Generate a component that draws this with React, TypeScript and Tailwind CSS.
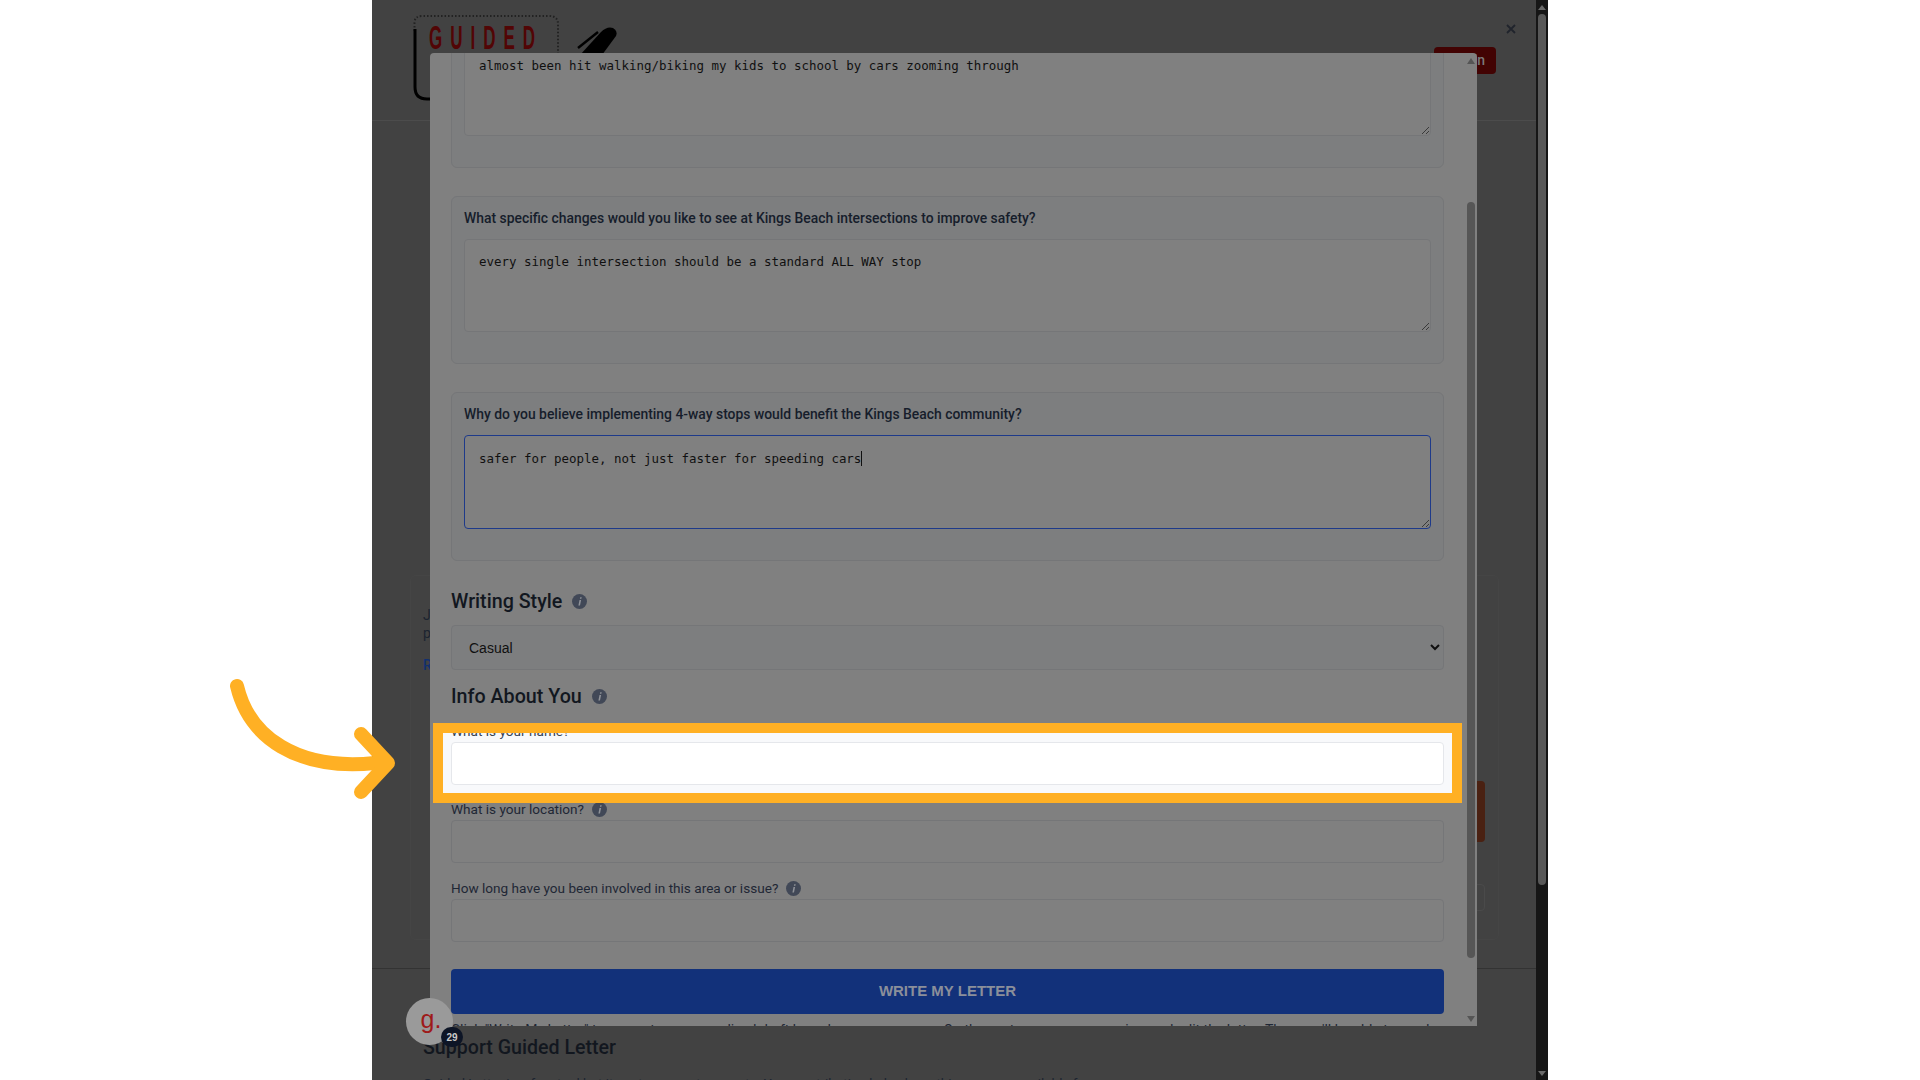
import React from "react";

const Info = () => (
  <svg width="15" height="15" viewBox="0 0 15 15" className="shrink-0">
    <circle cx="7.5" cy="7.5" r="7.5" fill="#414857" />
    <path d="M8.2 3.2h1.5l-.3 1.5H7.9zM7.5 6h1.6L8 11.6H6.4z" fill="#8f9298" />
  </svg>
);

const Grip = () => (
  <svg width="9" height="9" viewBox="0 0 9 9" className="absolute right-0 bottom-0">
    <path d="M1 8L8 1M5 8L8 5" stroke="#3a3a3a" strokeWidth="1" />
  </svg>
);

const QuestionCard = ({ label, text, focused, caret }: { label?: string; text: string; focused?: boolean; caret?: boolean }) => (
  <div
    className={`border border-[#757678] rounded-md bg-[#7d7e7f] px-[12px] flex flex-col justify-end pb-[31px] ${
      focused ? "h-[169px] mb-[26px]" : "h-[168px] mb-[28px]"
    }`}
  >
    {label && <p className="text-[13.9px] leading-5 font-medium text-[#161d2b] mb-[11px]">{label}</p>}
    <div
      className={`relative rounded bg-[#808080] px-[12px] font-['DejaVu_Sans_Mono',monospace] text-[12.46px] leading-[20px] text-[#101010] border ${
        focused ? "h-[94px] pt-[13px] pl-[14px] border-[#1e3a8a]" : "h-[93px] pt-[12px] pl-[14px] border-[#757678]"
      }`}
    >
      {text}
      {caret && <span className="inline-block w-px h-[15px] bg-[#101010] align-text-bottom" />}
      <Grip />
    </div>
  </div>
);

const Field = ({ label, info }: { label: string; info?: boolean }) => (
  <div className="mb-[15px]">
    <div className="h-[21px] flex items-center gap-2 text-[13.6px] text-[#1f2735]">
      <span>{label}</span>
      {info && <Info />}
    </div>
    <input className="block w-full h-[43px] rounded border border-[#757678] bg-[#808080]" readOnly />
  </div>
);

const Heading = ({ children }: { children: string }) => (
  <div className="h-[28px] pt-px flex items-center gap-[10px] text-[19.7px] font-medium text-[#12171f]">
    <span>{children}</span>
    <Info />
  </div>
);

const App = () => {
  return (
    <div className="relative flex h-screen overflow-hidden bg-white font-['Roboto',sans-serif]">
      <div className="w-[372px] shrink-0" />

      {/* dimmed page behind the modal */}
      <div className="w-[1164px] shrink-0 flex flex-col bg-[#424242]">
        <header className="h-[121px] shrink-0 flex justify-between border-b border-[#4c4c4c] pl-[41px] pr-[19px]">
          <div className="flex items-start pt-[15px] gap-[18px]">
            <div className="relative w-[146px] h-[86px]">
              <svg width="146" height="86" viewBox="0 0 146 86" className="absolute inset-0">
                <path d="M1.5 16V8Q1.5 1 9 1H136Q145 1 145 9V40" fill="none" stroke="#222" strokeWidth="2" strokeDasharray="1.5 2" />
                <path d="M2 14V72Q2 84 14 84H24" fill="none" stroke="#000" strokeWidth="3" />
              </svg>
              <span className="absolute left-[16px] top-[2px] origin-left scale-x-50 whitespace-nowrap font-['Liberation_Sans',sans-serif] font-bold text-[34px] leading-[40px] tracking-[16px] text-[#520505]">
                GUIDED
              </span>
            </div>
            <svg width="42" height="40" viewBox="0 0 42 40" className="mt-[12px]">
              <path d="M3 28L24 5Q30 -1 36 1Q41 4 39 9L25 28L20 34Z" fill="#000" />
              <path d="M1 21L21 5" stroke="#000" strokeWidth="2.5" />
            </svg>
          </div>
          <div className="flex items-start gap-[9px]">
            <div className="mt-[47px] w-[62px] h-[27px] rounded bg-[#420303] flex items-center justify-end pr-[11px] text-[14px] font-medium text-[#7a7a7a]">
              Log in
            </div>
            <svg width="12" height="12" viewBox="0 0 12 12" className="mt-[23px]">
              <path d="M2 2L10 10M10 2L2 10" stroke="#20242c" strokeWidth="1.8" />
            </svg>
          </div>
        </header>

        <main className="h-[847px] shrink-0 pl-[38px] pr-[37px] pt-[454px]">
          <div className="relative h-[365px] border border-[#454545] rounded-md pl-[12px] pr-[13px] pt-[30px] text-[14px] leading-[18px] text-[#1c2430]">
            <p>Join us</p>
            <p>people</p>
            <p className="mt-[14px] font-medium text-[#12306f]">Read more</p>
            <div className="ml-auto mt-[107px] w-[300px] h-[61px] rounded bg-[#4a2112]" />
            <div className="ml-auto mt-[42px] w-[300px] h-[27px] rounded border border-[#4a4a4a]" />
          </div>
        </main>

        <footer className="flex-1 border-t border-[#333] pl-[51px] pt-[65px]">
          <h2 className="text-[19.6px] leading-[28px] font-medium text-[#12171f]">Support Guided Letter</h2>
          <p className="mt-[12px] text-[13.4px] whitespace-nowrap text-[#1c2430]">
            Guided Letter is a free tool but it costs money to operate. Your contribution helps keep this resource available for
          </p>
        </footer>
      </div>

      {/* page scrollbar */}
      <div className="w-[12px] shrink-0 bg-[#161616] flex flex-col items-center">
        <div className="h-[14px] flex items-center">
          <div className="border-x-[4px] border-x-transparent border-b-[5px] border-b-[#6a6a6a]" />
        </div>
        <div className="h-[871px] w-[8px] rounded-full bg-[#585858]" />
        <div className="mt-auto h-[14px] flex items-center">
          <div className="border-x-[4px] border-x-transparent border-t-[5px] border-t-[#6a6a6a]" />
        </div>
      </div>

      {/* modal */}
      <div className="absolute left-[430px] top-[53px] w-[1047px] h-[973px] rounded-t overflow-hidden bg-[#808080] flex">
        <div className="w-[1035px] shrink-0 px-[21px] -mt-[53px]">
          <QuestionCard text="almost been hit walking/biking my kids to school by cars zooming through" />
          <QuestionCard
            label="What specific changes would you like to see at Kings Beach intersections to improve safety?"
            text="every single intersection should be a standard ALL WAY stop"
          />
          <QuestionCard
            label="Why do you believe implementing 4-way stops would benefit the Kings Beach community?"
            text="safer for people, not just faster for speeding cars"
            focused
            caret
          />
          <Heading>Writing Style</Heading>
          <select className="block w-full h-[45px] mt-[10px] mb-[12px] rounded border border-[#757678] bg-[#7d7e7f] px-[13px] font-['Liberation_Sans',sans-serif] text-[14px] text-[#101010]">
            <option>Casual</option>
          </select>
          <Heading>Info About You</Heading>
          {/* name field sits in the highlight overlay */}
          <div className="h-[64px] mt-[10px] mb-[15px]" />
          <Field label="What is your location?" info />
          <Field label="How long have you been involved in this area or issue?" info />
          <div className="h-[45px] mt-[27px] rounded bg-[#12317a] flex items-center justify-center font-['Liberation_Sans',sans-serif] text-[15px] font-bold text-[#8b8f9a]">
            WRITE MY LETTER
          </div>
          <p className="mt-[6px] text-[14px] whitespace-nowrap text-[#1f2735]">
            Click "Write My Letter" to generate a personalized draft based on your answers. On the next page, you can review and edit the letter. Then you'll be able to send
          </p>
        </div>
        <div className="w-[12px] shrink-0 flex flex-col items-center">
          <div className="h-[16px] flex items-center">
            <div className="border-x-[4px] border-x-transparent border-b-[6px] border-b-[#555]" />
          </div>
          <div className="mt-[133px] h-[756px] w-[8px] rounded-full bg-[#565656]" />
          <div className="mt-auto h-[14px] flex items-center">
            <div className="border-x-[4px] border-x-transparent border-t-[6px] border-t-[#555]" />
          </div>
        </div>
      </div>

      {/* tutorial highlight and arrow */}
      <div className="absolute left-[433px] top-[723px] w-[1029px] h-[80px] border-[10px] border-[#ffb024] bg-[#f8f9fb] overflow-hidden px-[8px]">
        <div className="h-[21px] -mt-[12px] flex items-center text-[13.6px] text-[#374151]">What is your name?</div>
        <input className="block w-full h-[43px] rounded border border-[#e5e7eb] bg-white" readOnly />
      </div>
      <svg width="180" height="130" viewBox="0 0 180 130" className="absolute left-[225px] top-[675px]">
        <path d="M12 11C24 62 72 96 150 88" fill="none" stroke="#ffb024" strokeWidth="14" strokeLinecap="round" />
        <path d="M136 59L163 88L136 117" fill="none" stroke="#ffb024" strokeWidth="14" strokeLinecap="round" strokeLinejoin="round" />
      </svg>

      {/* chat bubble */}
      <div className="absolute left-[406px] top-[998px] w-[47px] h-[47px] rounded-full bg-[#9a9a9a] flex items-center justify-center pl-[3px] pb-[5px] font-['Liberation_Sans',sans-serif] text-[25px] leading-none text-[#9e1a1a]">
        g.
      </div>
      <div className="absolute left-[441px] top-[1027px] w-[22px] h-[20px] rounded-full bg-[#0d1526] flex items-center justify-center font-['Liberation_Sans',sans-serif] text-[10px] font-bold text-[#c8c8c8]">
        29
      </div>
    </div>
  );
};

export default App;
